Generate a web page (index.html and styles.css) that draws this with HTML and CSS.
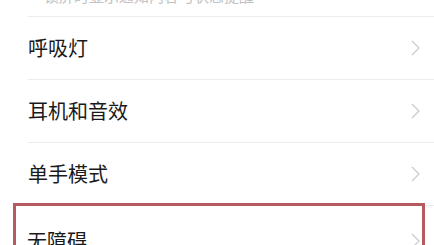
FILE: index.html
```html
<!DOCTYPE html>
<html lang="zh-CN">
<head>
    <meta charset="UTF-8">
    <meta name="viewport" content="width=device-width, initial-scale=1.0">
    <title>设置</title>
    <link rel="stylesheet" href="styles.css">
</head>
<body>

<div class="settings-list">
    <div class="row row-cut">
        <span class="row-sub">锁屏时显示通知内容与状态提醒</span>
    </div>

    <div class="row">
        <span class="row-title">呼吸灯</span>
        <svg class="chevron" width="9" height="16" viewBox="0 0 9 16"><polyline points="1,1 8,8 1,15" /></svg>
    </div>

    <div class="row">
        <span class="row-title">耳机和音效</span>
        <svg class="chevron" width="9" height="16" viewBox="0 0 9 16"><polyline points="1,1 8,8 1,15" /></svg>
    </div>

    <div class="row">
        <span class="row-title">单手模式</span>
        <svg class="chevron" width="9" height="16" viewBox="0 0 9 16"><polyline points="1,1 8,8 1,15" /></svg>
    </div>

    <div class="highlight">
        <div class="row row-last">
            <span class="row-title">无障碍</span>
            <svg class="chevron" width="9" height="16" viewBox="0 0 9 16"><polyline points="1,1 8,8 1,15" /></svg>
        </div>
    </div>
</div>

</body>
</html>
```

FILE: styles.css
```css
/* Settings list */
body {
    margin: 0;
    padding: 0;
    background-color: #ffffff;
    font-family: "Noto Sans CJK SC", "Noto Sans", sans-serif;
    overflow: hidden;
}

.settings-list {
    display: flex;
    flex-direction: column;
}

.row {
    display: flex;
    align-items: center;
    justify-content: space-between;
    height: 62px;
    margin-left: 28px;
    padding-right: 14px;
    border-bottom: 1px solid #ececec;
}

.row-cut {
    height: 16px;
    align-items: flex-end;
    overflow: hidden;
}

.row-sub {
    font-size: 15px;
    line-height: 15px;
    color: #c2c2c2;
    margin-bottom: 13px;
    padding-left: 16px;
}

.row-title {
    font-size: 20px;
    color: #1a1a1a;
    line-height: 24px;
}

.chevron {
    fill: none;
    stroke: #cccccc;
    stroke-width: 1.3;
}

.highlight {
    margin: -3px 9px 0 13px;
    border: 3px solid #b55a60;
    border-bottom: none;
}

.row-last {
    margin-left: 11px;
    padding-right: 2px;
    padding-top: 4px;
    border-bottom: none;
}
```
